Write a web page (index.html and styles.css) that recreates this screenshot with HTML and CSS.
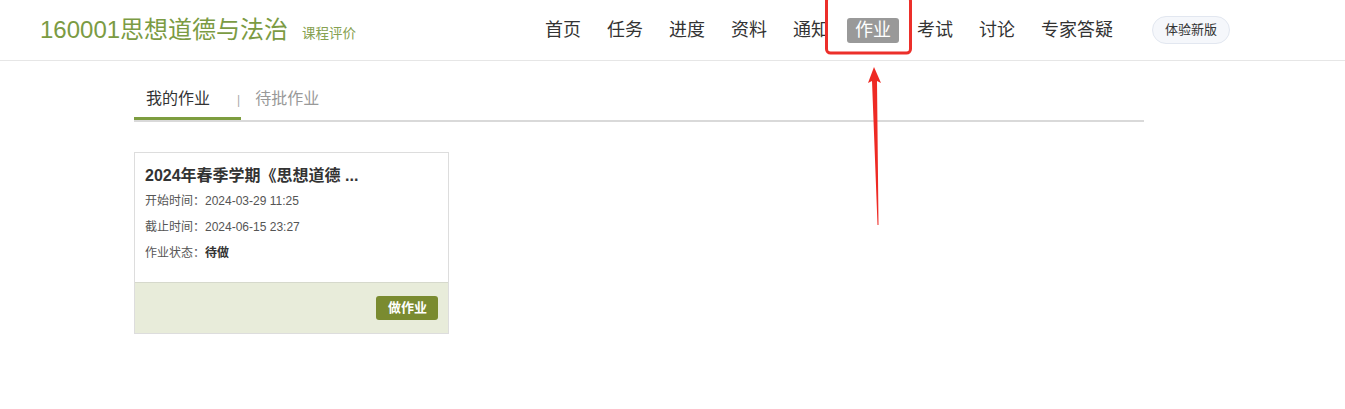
FILE: index.html
```html
<!DOCTYPE html>
<html>
    <head>
        <title>作业</title>
        <link rel="stylesheet" href="styles.css">
    </head>
    <body>
        <div class="header">
            <div class="brand">
                <span class="course">160001思想道德与法治</span>
                <span class="rate">课程评价</span>
            </div>
            <div class="nav">
                <span class="nav-item">首页</span>
                <span class="nav-item">任务</span>
                <span class="nav-item">进度</span>
                <span class="nav-item">资料</span>
                <span class="nav-item">通知</span>
                <span class="nav-item active">作业</span>
                <span class="nav-item">考试</span>
                <span class="nav-item">讨论</span>
                <span class="nav-item">专家答疑</span>
                <span class="pill">体验新版</span>
            </div>
        </div>

        <div class="main">
            <div class="tabs">
                <span class="tab current">我的作业</span>
                <span class="sep">|</span>
                <span class="tab">待批作业</span>
            </div>

            <div class="card">
                <div class="card-body">
                    <div class="card-title">2024年春季学期《思想道德 ...</div>
                    <div class="row">开始时间：2024-03-29 11:25</div>
                    <div class="row">截止时间：2024-06-15 23:27</div>
                    <div class="row">作业状态：<b>待做</b></div>
                </div>
                <div class="card-foot">
                    <span class="do-btn">做作业</span>
                </div>
            </div>
        </div>

        <!-- annotation drawn on top of the screenshot -->
        <svg class="mark" width="1345" height="409" viewBox="0 0 1345 409">
            <rect x="826.5" y="-3" width="84" height="56" rx="4" fill="none" stroke="#ec2f2a" stroke-width="3"/>
            <polygon points="874,67 881,83 877,81 878.5,225 877.5,225 872,81 868,83" fill="#ee2a24"/>
        </svg>
    </body>
</html>
```

FILE: styles.css
```css
body {
    margin: 0;
    background: #fff;
    font-family: "Liberation Sans", "Noto Sans CJK SC", sans-serif;
    color: #333;
}
.header {
    height: 60px;
    border-bottom: 1px solid #e6e6e6;
    display: flex;
    align-items: center;
}
.brand {
    width: 497px;
    padding-left: 40px;
    margin-bottom: 6px;
    display: flex;
    align-items: baseline;
}
.course {
    font-size: 24px;
    color: #7b9b43;
}
.rate {
    font-size: 13.5px;
    color: #86a150;
    margin-left: 14px;
}
.nav {
    display: flex;
    align-items: center;
    gap: 10px;
}
.nav-item {
    font-size: 18px;
    line-height: 25px;
    padding: 0 8px;
    color: #333;
    border-radius: 3px;
}
.nav-item.active {
    background: #999;
    color: #fff;
}
.pill {
    margin-left: 21px;
    font-size: 13px;
    line-height: 26px;
    padding: 0 12px;
    border: 1px solid #e2e7f0;
    background: #f5f7fb;
    border-radius: 14px;
    color: #333;
}
.main {
    width: 1010px;
    margin-left: 134px;
}
.tabs {
    margin-top: 26px;
    height: 33px;
    border-bottom: 2px solid #d9d9d9;
    display: flex;
    align-items: flex-start;
}
.tab {
    font-size: 16px;
    line-height: 24px;
    color: #999;
}
.tab.current {
    color: #333;
    height: 33px;
    padding: 0 31px 0 12px;
    border-bottom: 3px solid #7d9d3f;
    box-sizing: border-box;
}
.sep {
    font-size: 12px;
    line-height: 26px;
    color: #aaa;
    margin-left: -4px;
    margin-right: 15px;
}
.card {
    margin-top: 30px;
    width: 313px;
    border: 1px solid #ddd;
}
.card-body {
    padding: 9px 10px 0;
    height: 120px;
}
.card-title {
    font-size: 16px;
    font-weight: bold;
    color: #333;
    margin-bottom: 2px;
}
.row {
    font-size: 12px;
    color: #555;
    line-height: 26px;
}
.row b {
    color: #333;
}
.card-foot {
    height: 50px;
    background: #e8ecda;
    border-top: 1px solid #d6d9cc;
    display: flex;
    align-items: center;
    justify-content: flex-end;
    padding-right: 10px;
}
.do-btn {
    background: #7a8b30;
    color: #fff;
    font-size: 13px;
    font-weight: bold;
    line-height: 24px;
    padding: 0 11px 0 12px;
    border-radius: 3px;
}
.mark {
    position: absolute;
    left: 0;
    top: 0;
    pointer-events: none;
}
```
